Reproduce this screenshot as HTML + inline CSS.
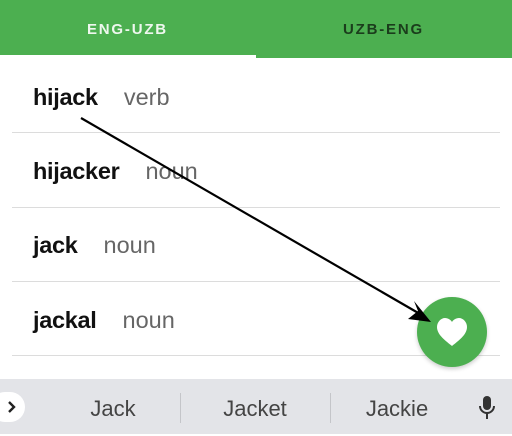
<!DOCTYPE html>
<html><head><style>
*{margin:0;padding:0;box-sizing:border-box}
body{width:512px;height:436px;overflow:hidden;background:#fff;font-family:"Liberation Sans",Arial,sans-serif;position:relative}
.hdr{position:absolute;left:0;top:0;width:512px;height:58px;background:#4caf50}
.tab{position:absolute;top:21px;font-size:15px;font-weight:bold;letter-spacing:1.8px}
.ul{position:absolute;left:0;top:55px;width:256px;height:3px;background:#fff}
.row{position:absolute;left:33px;font-size:23.5px;line-height:26px}
.row b{color:#111;letter-spacing:-0.3px}
.row span{color:#666;margin-left:26px}
.div{position:absolute;left:12px;width:488px;height:1px;background:#dcdcdc}
.kb{position:absolute;left:0;top:379px;width:512px;height:55px;background:#e3e4e8}
.kw{position:absolute;top:396px;font-size:22px;color:#444;transform:translateX(-50%)}
.sep{position:absolute;top:393px;width:1px;height:30px;background:#c4c5c9}
</style></head><body>
<div class="hdr"></div>
<div class="tab" style="left:87px;color:#eef7ee">ENG-UZB</div>
<div class="tab" style="left:343px;color:#1b3d1c">UZB-ENG</div>
<div class="ul"></div>
<div class="row" style="top:84px"><b>hijack</b><span>verb</span></div>
<div class="div" style="top:132px"></div>
<div class="row" style="top:158px"><b>hijacker</b><span>noun</span></div>
<div class="div" style="top:207px"></div>
<div class="row" style="top:232px"><b>jack</b><span>noun</span></div>
<div class="div" style="top:281px"></div>
<div class="row" style="top:307px"><b>jackal</b><span>noun</span></div>
<div class="div" style="top:355px"></div>
<div class="kb"></div>
<div style="position:absolute;left:-10px;top:392px;width:35px;height:30px;border-radius:15px;background:#fff"></div>
<svg style="position:absolute;left:0;top:392px" width="25" height="30"><path d="M9 10l5 5-5 5" stroke="#222" stroke-width="2.4" fill="none"/></svg>
<div class="kw" style="left:113px">Jack</div>
<div class="sep" style="left:180px"></div>
<div class="kw" style="left:255px">Jacket</div>
<div class="sep" style="left:330px"></div>
<div class="kw" style="left:397px">Jackie</div>
<svg style="position:absolute;left:477px;top:394px" width="20" height="28"><rect x="6" y="2" width="8" height="14" rx="4" fill="#333"/><path d="M3 12a7 7 0 0 0 14 0" stroke="#333" stroke-width="2" fill="none"/><path d="M10 19v6" stroke="#333" stroke-width="2"/></svg>
<div style="position:absolute;left:417px;top:297px;width:70px;height:70px;border-radius:50%;background:#4caf50;box-shadow:0 2px 4px rgba(0,0,0,.2)"></div>
<svg style="position:absolute;left:0;top:0" width="512" height="436">
<path d="M452 346 C446 341 437 335 437 327 C437 322 441 318 445 318 C448 318 451 320 452 322 C453 320 456 318 459 318 C463 318 467 322 467 327 C467 335 458 341 452 346Z" fill="#fff"/>
<line x1="81" y1="118" x2="420" y2="314" stroke="#000" stroke-width="2.2"/>
<path d="M431 322 L408 319 L418 311 L414 301Z" fill="#000"/>
</svg>
</body></html>
